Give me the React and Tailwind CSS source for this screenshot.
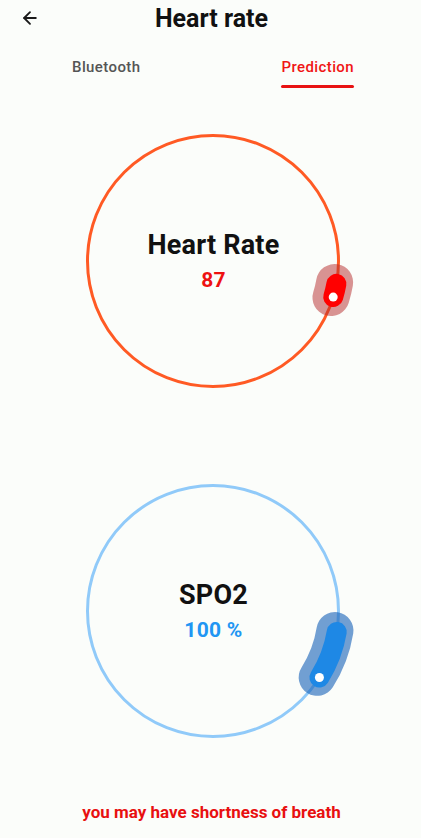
import React from "react";
import { ArrowLeft } from "lucide-react";

const C = 145;
const R = 125.5;
function pt(r, deg) {
  const a = (deg * Math.PI) / 180;
  return [C + r * Math.cos(a), C + r * Math.sin(a)];
}
function arc(r, a1, a2) {
  const [x1, y1] = pt(r, a1);
  const [x2, y2] = pt(r, a2);
  return `M ${x1.toFixed(2)} ${y1.toFixed(2)} A ${r} ${r} 0 0 1 ${x2.toFixed(2)} ${y2.toFixed(2)}`;
}

function Gauge({ ring, halo, haloOpacity, thumb, a1, a2, title, value, valueColor }) {
  const [dx, dy] = pt(R, a2);
  return (
    <div className="relative w-[290px] h-[290px]">
      <svg width="290" height="290" viewBox="0 0 290 290" className="absolute inset-0">
        <circle cx={C} cy={C} r={R} fill="none" stroke={ring} strokeWidth="3" />
        <path d={arc(R - 2, a1 - 0.5, a2 + 0.5)} fill="none" stroke={halo} strokeOpacity={haloOpacity} strokeWidth="37" strokeLinecap="round" />
        <path d={arc(R, a1, a2)} fill="none" stroke={thumb} strokeWidth="20" strokeLinecap="round" />
        <circle cx={dx} cy={dy} r="4.5" fill="#ffffff" />
      </svg>
      <div className="absolute inset-0 flex flex-col items-center justify-center gap-[8px] pl-[2px]">
        <div className="text-[27px] leading-[30px] font-bold text-[#111] tracking-[0.2px]">{title}</div>
        <div className="text-[21px] leading-[24px] font-bold tracking-[0.3px]" style={{ color: valueColor }}>{value}</div>
      </div>
    </div>
  );
}

export default function App() {
  return (
    <div className="w-[421px] h-[838px] bg-[#fbfdfa] overflow-hidden flex flex-col" style={{ fontFamily: "Roboto, 'Liberation Sans', sans-serif" }}>
      <div className="relative h-9 flex items-center justify-center">
        <ArrowLeft className="absolute left-[20px] top-[8px] text-[#1a1a1a]" size={20} strokeWidth={2.2} />
        <div className="text-[25px] font-bold text-[#111] leading-none pl-[2px]">Heart rate</div>
      </div>
      <div className="grid grid-cols-2 pt-[21px]">
        <div className="flex justify-center pl-[2px]">
          <div className="flex flex-col items-center">
            <div className="text-[15px] leading-[20px] font-medium text-[#555] tracking-[0.4px]">Bluetooth</div>
            <div className="mt-[8px] h-[3px]" />
          </div>
        </div>
        <div className="flex justify-center pl-[4px]">
          <div className="flex flex-col items-stretch">
            <div className="text-[15px] leading-[20px] font-medium text-[#f01515] tracking-[0.4px]">Prediction</div>
            <div className="mt-[8px] h-[3px] rounded-full bg-[#e81212]" />
          </div>
        </div>
      </div>
      <div className="flex justify-center pl-1 mt-[28px]">
        <Gauge ring="#ff5a24" halo="#b52a2a" haloOpacity={0.5} thumb="#ff0000" a1={10.5} a2={16.7} title="Heart Rate" value="87" valueColor="#ee1111" />
      </div>
      <div className="flex justify-center pl-1 mt-[60px]">
        <Gauge ring="#90caf9" halo="#1560b8" haloOpacity={0.6} thumb="#1e88e5" a1={9.6} a2={32} title="SPO2" value="100 %" valueColor="#2196f3" />
      </div>
      <div className="mt-[46px] text-center text-[17px] leading-[20px] font-bold text-[#e81010] pl-[2px]">you may have shortness of breath</div>
    </div>
  );
}
